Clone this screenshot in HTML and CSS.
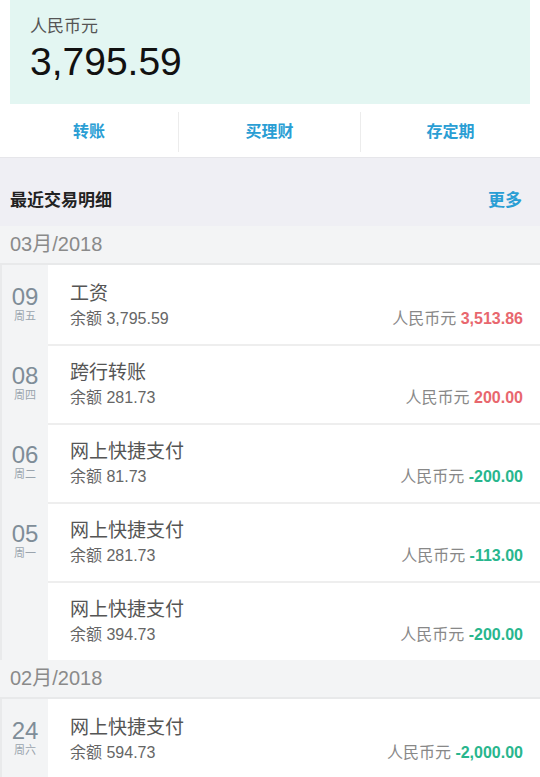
FILE: index.html
```html
<!DOCTYPE html>
<html lang="zh-CN">
<head>
  <meta charset="UTF-8">
  <meta name="viewport" content="width=device-width, initial-scale=1.0">
  <title>账户明细</title>
  <link rel="stylesheet" href="styles.css">
</head>
<body>
  <div class="page">
    <section class="balance">
      <div class="balance-label">人民币元</div>
      <div class="balance-value">3,795.59</div>
    </section>

    <nav class="actions">
      <a href="#">转账</a>
      <a href="#">买理财</a>
      <a href="#">存定期</a>
    </nav>

    <div class="list-head">
      <h2>最近交易明细</h2>
      <a href="#">更多</a>
    </div>

    <div class="month">03月/2018</div>

    <div class="tx">
      <div class="day"><b>09</b><span>周五</span></div>
      <div class="tx-body">
        <div class="tx-info">
          <div class="tx-title">工资</div>
          <div class="tx-rest">余额 3,795.59</div>
        </div>
        <div class="tx-amount">人民币元 <em class="in">3,513.86</em></div>
      </div>
    </div>

    <div class="tx">
      <div class="day"><b>08</b><span>周四</span></div>
      <div class="tx-body">
        <div class="tx-info">
          <div class="tx-title">跨行转账</div>
          <div class="tx-rest">余额 281.73</div>
        </div>
        <div class="tx-amount">人民币元 <em class="in">200.00</em></div>
      </div>
    </div>

    <div class="tx">
      <div class="day"><b>06</b><span>周二</span></div>
      <div class="tx-body">
        <div class="tx-info">
          <div class="tx-title">网上快捷支付</div>
          <div class="tx-rest">余额 81.73</div>
        </div>
        <div class="tx-amount">人民币元 <em class="out">-200.00</em></div>
      </div>
    </div>

    <div class="tx">
      <div class="day"><b>05</b><span>周一</span></div>
      <div class="tx-body">
        <div class="tx-info">
          <div class="tx-title">网上快捷支付</div>
          <div class="tx-rest">余额 281.73</div>
        </div>
        <div class="tx-amount">人民币元 <em class="out">-113.00</em></div>
      </div>
    </div>

    <div class="tx">
      <div class="day"></div>
      <div class="tx-body">
        <div class="tx-info">
          <div class="tx-title">网上快捷支付</div>
          <div class="tx-rest">余额 394.73</div>
        </div>
        <div class="tx-amount">人民币元 <em class="out">-200.00</em></div>
      </div>
    </div>

    <div class="month">02月/2018</div>

    <div class="tx">
      <div class="day"><b>24</b><span>周六</span></div>
      <div class="tx-body">
        <div class="tx-info">
          <div class="tx-title">网上快捷支付</div>
          <div class="tx-rest">余额 594.73</div>
        </div>
        <div class="tx-amount">人民币元 <em class="out">-2,000.00</em></div>
      </div>
    </div>
  </div>
</body>
</html>
```

FILE: styles.css
```css
* {
  margin: 0;
  padding: 0;
  box-sizing: border-box;
}

body {
  font-family: "Liberation Sans", "Noto Sans CJK SC", sans-serif;
  background: #fff;
  color: #333;
  overflow: hidden;
}

.page {
  width: 540px;
}

/* solde */
.balance {
  margin: 0 10px;
  height: 104px;
  background: #e3f6f2;
  padding: 15px 20px 0;
}

.balance-label {
  font-size: 17px;
  color: #555;
  line-height: 24px;
}

.balance-value {
  font-size: 39px;
  color: #111;
  line-height: 44px;
  margin-top: 1px;
}

/* boutons */
.actions {
  display: flex;
  height: 54px;
  align-items: center;
  border-bottom: 1px solid #e6e6ea;
  padding-top: 2px;
}

.actions a {
  flex: 1;
  text-align: center;
  color: #2a9ed4;
  font-weight: bold;
  font-size: 16px;
  text-decoration: none;
  line-height: 40px;
  border-left: 1px solid #ececec;
}

.actions a:first-child {
  border-left: none;
  flex: 0 0 178px;
}

.actions a:nth-child(2) {
  flex: 0 0 182px;
}

.list-head {
  display: flex;
  justify-content: space-between;
  align-items: center;
  height: 68px;
  background: #efeff4;
  padding: 12px 18px 0 10px;
}

.list-head h2 {
  font-size: 17px;
  color: #222;
}

.list-head a {
  color: #2a9ed4;
  font-size: 17px;
  font-weight: bold;
  text-decoration: none;
}

.month {
  height: 39px;
  background: #f3f4f5;
  border-bottom: 2px solid #e8e9ea;
  color: #8a8a8a;
  font-size: 20px;
  line-height: 37px;
  padding-left: 10px;
}

/* lignes */
.tx {
  display: flex;
  height: 79px;
  background: #f3f4f5;
  border-left: 2px solid #e9eaeb;
}

.day {
  width: 46px;
  display: flex;
  flex-direction: column;
  align-items: center;
  padding-top: 19px;
  color: #7f8d98;
}

.day b {
  font-weight: normal;
  font-size: 24px;
  line-height: 26px;
}

.day span {
  font-size: 11px;
  color: #9aa4ad;
  line-height: 13px;
}

.tx-body {
  flex: 1;
  display: flex;
  justify-content: space-between;
  align-items: flex-end;
  background: #fff;
  border-top: 2px solid #eeeeee;
  padding: 0 17px 15px 22px;
}

.month + .tx .tx-body {
  border-top: none;
}

.tx-title {
  font-size: 19px;
  color: #555;
  line-height: 26px;
  margin-bottom: 2px;
}

.tx-rest {
  font-size: 16px;
  color: #666;
  line-height: 20px;
}

.tx-amount {
  font-size: 16px;
  color: #888;
  line-height: 20px;
}

.tx-amount em {
  font-style: normal;
  font-weight: bold;
  font-size: 16px;
}

.in {
  color: #e8676e;
}

.out {
  color: #28b68d;
}
```
